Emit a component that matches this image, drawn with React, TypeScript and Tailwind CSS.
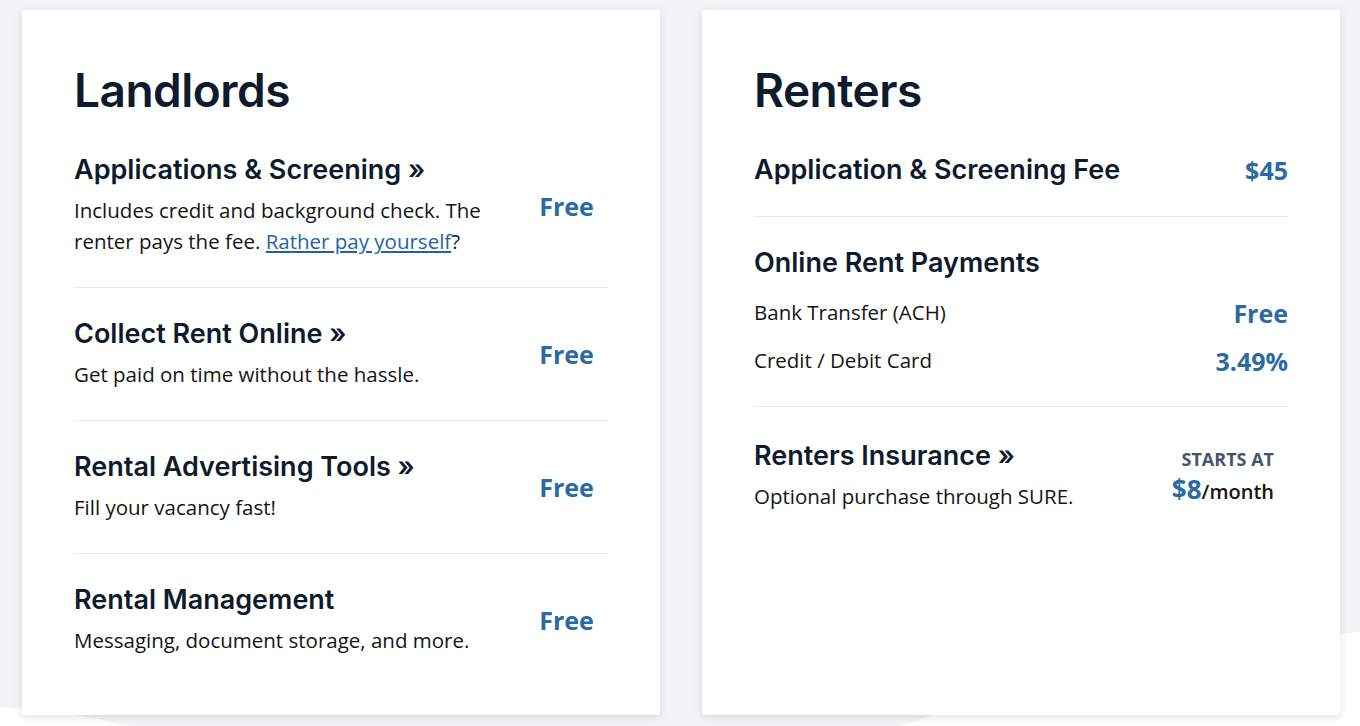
import React from "react";

const HEAD = "font-['Inter','Liberation_Sans',sans-serif]";
const BODY = "font-['Open_Sans','Noto_Sans',sans-serif]";
const H3 = `${HEAD} text-[27px] leading-[32px] font-semibold text-[#0e1b2d] tracking-[0px]`;
const P = `${BODY} text-[20.5px] leading-[31px] text-[#141414]`;

function Price({ children }: { children: React.ReactNode }) {
  return (
    <span className={`${BODY} text-[25px] leading-[32px] font-bold text-[#2b6aa2]`}>{children}</span>
  );
}

function LandlordRow({
  title,
  body,
  last,
}: {
  title: string;
  body: React.ReactNode;
  last?: boolean;
}) {
  return (
    <div
      className={`flex items-center py-[30px] ${last ? "" : "border-b border-[#e6e8ec]"}`}
    >
      <div className="flex-1 flex flex-col gap-[9px]">
        <div className={H3}>{title}</div>
        <div className={P}>{body}</div>
      </div>
      <div className="w-[83px] shrink-0 text-center">
        <Price>Free</Price>
      </div>
    </div>
  );
}

export default function App() {
  return (
    <div className="relative w-full h-[726px] overflow-hidden bg-[#f3f4f6]">
      <svg
        className="absolute inset-0 w-full h-full"
        viewBox="0 0 1360 726"
        preserveAspectRatio="none"
      >
        <path d="M0 707 Q60 710 130 726 L900 726 Q1120 650 1360 632 L1360 726 L0 726 Z" fill="#ffffff" />
      </svg>
      <div className="relative flex gap-[42px] pl-[22px] pt-[10px]">
        {/* Landlords */}
        <div className="w-[638px] h-[705px] bg-white rounded-[3px] shadow-[0_2px_10px_rgba(15,23,42,0.13)] px-[52px] pt-[52px]">
          <h2 className={`${HEAD} text-[46px] leading-[56px] font-semibold text-[#0e1b2d] tracking-[-0.5px] mb-[6px]`}>
            Landlords
          </h2>
          <LandlordRow
            title="Applications & Screening »"
            body={
              <>
                Includes credit and background check. The renter pays the fee.{" "}
                <a href="#" className="text-[#1f63a6] underline underline-offset-2">
                  Rather pay yourself
                </a>
                ?
              </>
            }
          />
          <LandlordRow title="Collect Rent Online »" body="Get paid on time without the hassle." />
          <LandlordRow title="Rental Advertising Tools »" body="Fill your vacancy fast!" />
          <LandlordRow
            title="Rental Management"
            body="Messaging, document storage, and more."
            last
          />
        </div>

        {/* Renters */}
        <div className="w-[638px] h-[705px] bg-white rounded-[3px] shadow-[0_2px_10px_rgba(15,23,42,0.13)] px-[52px] pt-[52px]">
          <h2 className={`${HEAD} text-[46px] leading-[56px] font-semibold text-[#0e1b2d] tracking-[-0.5px] mb-[6px]`}>
            Renters
          </h2>
          <div className="flex items-center justify-between py-[30px] border-b border-[#e6e8ec]">
            <div className={H3}>Application &amp; Screening Fee</div>
            <Price>$45</Price>
          </div>
          <div className="py-[30px] border-b border-[#e6e8ec]">
            <div className={H3}>Online Rent Payments</div>
            <div className="mt-[18px] flex flex-col gap-[17px]">
              <div className={`flex items-center justify-between h-[31px] ${P}`}>
                <span>Bank Transfer (ACH)</span>
                <Price>Free</Price>
              </div>
              <div className={`flex items-center justify-between h-[31px] ${P}`}>
                <span>Credit / Debit Card</span>
                <Price>3.49%</Price>
              </div>
            </div>
          </div>
          <div className="flex items-center justify-between pt-[33px]">
            <div className="flex flex-col gap-[9px]">
              <div className={H3}>Renters Insurance »</div>
              <div className={P}>Optional purchase through SURE.</div>
            </div>
            <div className={`pr-[14px] pt-[5px] flex flex-col items-end ${BODY}`}>
              <div className="text-[18px] leading-[22px] font-bold text-[#45566b] uppercase">
                Starts at
              </div>
              <div className="mt-[3px] leading-[33px]">
                <span className="text-[26px] font-bold text-[#2b6aa2]">$8</span>
                <span className="text-[20px] font-semibold text-[#141414]">/month</span>
              </div>
            </div>
          </div>
        </div>
      </div>
    </div>
  );
}
